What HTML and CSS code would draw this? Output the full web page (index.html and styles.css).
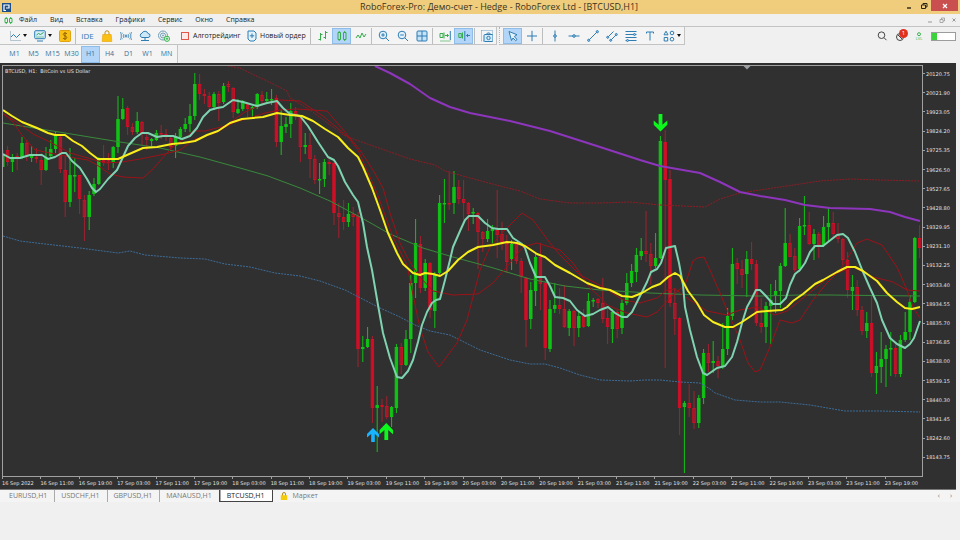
FILE: index.html
```html
<!DOCTYPE html>
<html lang="ru">
<head>
  <meta charset="utf-8">
  <title>RoboForex-Pro</title>
  <link rel="stylesheet" href="styles.css">
</head>
<body>
  <header class="titlebar">
    <svg class="app-logo" viewBox="0 0 9 9"><rect width="9" height="9" fill="#1c4f87"/><path d="M2 7.5V2h5v3H4M2 5v2.5h2" fill="none" stroke="#fff" stroke-width="1.2"/></svg>
    <h1>RoboForex-Pro: Демо-счет - Hedge - RoboForex Ltd - [BTCUSD,H1]</h1>
    <div class="window-buttons">
      <button aria-label="Свернуть"><svg viewBox="0 0 8 8"><path d="M2 6h4" stroke="#2b2413" stroke-width="1.4"/></svg></button>
      <button aria-label="Восстановить"><svg viewBox="0 0 8 8"><path d="M1.5 3h4v3.500h-4zM3 3V1.500h4V5H5.500" fill="none" stroke="#2b2413"/></svg></button>
      <button class="close" aria-label="Закрыть"><svg viewBox="0 0 8 8"><path d="M2 2l4 4M6 2L2 6" stroke="#fff" stroke-width="1.200"/></svg></button>
    </div>
  </header>

  <nav class="menu">
    <svg class="menu-logo" viewBox="0 0 9 9"><path d="M1 2.500h2.500v4H1zM5.500 2.500H8v4H5.500zM2.200 1v1.500M2.200 6.500V8M6.700 1v1.500M6.700 6.500V8" fill="none" stroke="#35b44a"/></svg>
    <a href="#">Файл</a>
    <a href="#">Вид</a>
    <a href="#">Вставка</a>
    <a href="#">Графики</a>
    <a href="#">Сервис</a>
    <a href="#">Окно</a>
    <a href="#">Справка</a>
    <div class="child-buttons">
      <button aria-label="Свернуть окно"><svg viewBox="0 0 8 8"><path d="M2 6h4" stroke="#999"/></svg></button>
      <button aria-label="Восстановить окно"><svg viewBox="0 0 8 8"><path d="M2 3.500h3v3H2zM3.500 3.500V2h3v3H5" fill="none" stroke="#999" stroke-width=".8"/></svg></button>
      <button aria-label="Закрыть окно"><svg viewBox="0 0 8 8"><path d="M2.500 2.500l3 3M5.500 2.500l-3 3" stroke="#999"/></svg></button>
    </div>
  </nav>

  <div class="toolbars">
    <div class="toolbar">
      <button class="tool drop" aria-label="Линия"><svg viewBox="0 0 12 12"><path d="M1.500 1v9.500H12" stroke="#9bb2c2" stroke-width=".7"/><path d="M2 7l2.500-2.500L7.500 7.500 11 4"/></svg><i class="caret"></i></button>
      <button class="tool drop" aria-label="Индикаторы"><svg viewBox="0 0 12 12"><rect x=".7" y=".7" width="10.600" height="8" rx="1" fill="#d5ecfa"/><path d="M2.500 5l2-1.500 2 1 3-2" stroke="#2ba84a"/><path d="M2.500 7h7" stroke="#2ba84a" stroke-dasharray="1 1"/><path d="M3 11h6"/></svg><i class="caret"></i></button>
      <button class="tool" aria-label="Депозит"><svg viewBox="0 0 12 12"><rect x=".500" y=".500" width="11" height="11" rx="1" fill="#fbc016" stroke="#e0a312"/><path d="M8 3.800C7 2.800 4.200 2.900 4.300 4.500 4.400 6 7.800 5.700 7.800 7.500 7.800 9.200 5 9.300 4 8.200M6 2v8" stroke="#8a5b00" stroke-width=".9"/></svg></button>
      <i class="sep"></i>
      <button class="tool ide">IDE</button>
      <button class="tool" aria-label="Маркет"><svg viewBox="0 0 12 12"><path d="M4 5V2.800a2 2 0 0 1 4 0V5" stroke="#c28c10"/><path d="M1.800 4.500h8.400l.6 7H1.200z" fill="#fbc016" stroke="#e8ab10" stroke-width=".7"/></svg></button>
      <button class="tool" aria-label="Сигналы"><svg viewBox="0 0 12 12"><circle cx="6" cy="6" r="1"/><path d="M4 4a3 3 0 0 0 0 4M8 4a3 3 0 0 1 0 4M2.500 2.800a4.500 4.500 0 0 0 0 6.400M9.500 2.800a4.500 4.500 0 0 1 0 6.400M1 2a6 6 0 0 0 0 8M11 2a6 6 0 0 1 0 8" stroke-width=".8"/></svg></button>
      <button class="tool" aria-label="Облако"><svg viewBox="0 0 12 12"><path d="M3 7.500a2.200 2.200 0 0 1 0-4.300 3.200 3.200 0 0 1 6 .3 2 2 0 0 1 0 4z" fill="#cfe8f8"/><path d="M6 7.500v3M2 10.500h8"/></svg></button>
      <button class="tool" aria-label="Тестер"><svg viewBox="0 0 12 12"><circle cx="5" cy="5.500" r="4.500" stroke="#6e9cb5"/><circle cx="5" cy="5.500" r="2.500" stroke="#6e9cb5"/><circle cx="5" cy="5.500" r=".6" stroke="#6e9cb5"/><circle cx="9" cy="8.800" r="2.600" fill="#fff" stroke="#35b44a"/><path d="M9 7.300v3M7.500 8.800h3" stroke="#35b44a"/></svg></button>
      <button class="tool-text"><svg viewBox="0 0 12 12"><rect x="2.500" y="2.500" width="7" height="7" fill="#fdeae8" stroke="#e2574c"/></svg>Алготрейдинг</button>
      <button class="tool-text"><svg viewBox="0 0 12 12"><path d="M2 1h6l2 2v6L8 11H4L2 9z" fill="#e4f2fc"/><path d="M6 3.500v4.500M3.800 5.800h4.400"/></svg>Новый ордер</button>
      <i class="sep"></i>
      <button class="tool" aria-label="Бары"><svg class="green" viewBox="0 0 12 12"><path d="M3.500 3v7.500M1.500 9.500h2M3.500 4.500h2M8.500 1v8M8.500 2.500h2M6.500 7.500h2"/></svg></button>
      <button class="tool active" aria-label="Свечи"><svg class="green" viewBox="0 0 12 12"><path d="M2 2.500h2.500v7H2zM7.500 2.500H10v7H7.500zM3.200 1v1.500M3.200 9.500V11M8.700 1v1.500M8.700 9.500V11"/></svg></button>
      <button class="tool" aria-label="Линия цены"><svg class="green" viewBox="0 0 12 12"><path d="M1 8l2-3 2 3 2-5 2 4 2-3"/></svg></button>
      <i class="sep"></i>
      <button class="tool" aria-label="Увеличить"><svg viewBox="0 0 12 12"><circle cx="5" cy="5" r="3.800" fill="#e4f2fc"/><path d="M7.800 7.800L11 11M3.200 5h3.600M5 3.200v3.600"/></svg></button>
      <button class="tool" aria-label="Уменьшить"><svg viewBox="0 0 12 12"><circle cx="5" cy="5" r="3.800" fill="#e4f2fc"/><path d="M7.800 7.800L11 11M3.200 5h3.600"/></svg></button>
      <button class="tool" aria-label="Плитка"><svg viewBox="0 0 12 12"><rect x="1" y="1" width="10" height="10" rx="1" fill="#c5e2f7"/><path d="M6 1v10M1 6h10"/></svg></button>
      <i class="sep"></i>
      <button class="tool" aria-label="Автопрокрутка"><svg class="green" viewBox="0 0 12 12"><path d="M1 3.500h3v4H1zM5 2.500v6M6 5.500h3.500M8 4l1.500 1.500L8 7"/><path d="M1 11h10.500" stroke-width=".6"/><path d="M11.300 1v9" stroke="#2f7db3"/></svg></button>
      <button class="tool active" aria-label="Сдвиг графика"><svg class="green" viewBox="0 0 12 12"><path d="M.8 3.500h2.500v4H.8zM4.500 2.500v6"/><path d="M6.800 1v10M12 5.500H8.500M10 4L8.500 5.500 10 7" stroke="#2f7db3"/></svg></button>
      <i class="sep"></i>
      <button class="tool" aria-label="Снимок"><svg viewBox="0 0 12 12"><rect x=".500" y=".500" width="11" height="10.500" stroke-dasharray="1 1" stroke-width=".7"/><rect x="3" y="4.500" width="9" height="7" rx="1" fill="#d5ecfa"/><path d="M5.500 4.300l1-1.300h2l1 1.300"/><circle cx="7.500" cy="8" r="1.700"/></svg></button>
    </div>
    <div class="toolbar drawing">
      <button class="tool active" aria-label="Курсор"><svg viewBox="0 0 12 12"><path d="M2 1.500l8 3.200-2.700 1.800L10 9.500 8.700 10.700 6 8l-1.500 2.500z" fill="#e4f2fc"/></svg></button>
      <button class="tool" aria-label="Перекрестие"><svg viewBox="0 0 12 12"><path d="M6 .8v10.400M1 6h10"/></svg></button>
      <i class="sep"></i>
      <button class="tool" aria-label="Вертикальная линия"><svg viewBox="0 0 12 12"><path d="M6 .5v11"/><circle cx="6" cy="6" r="1.300" fill="#9ccbed"/></svg></button>
      <button class="tool" aria-label="Горизонтальная линия"><svg viewBox="0 0 12 12"><path d="M.5 6h11"/><circle cx="6" cy="6" r="1.300" fill="#9ccbed"/></svg></button>
      <button class="tool" aria-label="Трендовая линия"><svg viewBox="0 0 12 12"><path d="M1.500 10.500l9-9"/><circle cx="1.700" cy="10.300" r="1.100" fill="#9ccbed"/><circle cx="10.300" cy="1.700" r="1.100" fill="#9ccbed"/></svg></button>
      <button class="tool" aria-label="Канал"><svg viewBox="0 0 12 12"><path d="M1.500 7.500l6-6M4.500 10.500l6-6"/><circle cx="1.700" cy="7.300" r="1" fill="#9ccbed"/><circle cx="4.700" cy="10.300" r="1" fill="#9ccbed"/><circle cx="10.300" cy="4.500" r="1" fill="#9ccbed"/></svg></button>
      <button class="tool" aria-label="Фибоначчи"><svg viewBox="0 0 12 12"><path d="M.5 1.500h11M.5 4.500h11M.5 7.500h11M.5 10.500h11"/><circle cx="9.500" cy="4.500" r="1" fill="#9ccbed"/><circle cx="2.500" cy="10.500" r="1" fill="#9ccbed"/></svg></button>
      <button class="tool" aria-label="Текст"><svg viewBox="0 0 12 12"><path d="M2.500 3.500V2h7v1.500M6 2v8.500"/></svg></button>
      <button class="tool drop" aria-label="Объекты"><svg viewBox="0 0 12 12"><path d="M3 1.200L5 4.800H1zM1.200 7.500h3.500V11H1.200z"/><circle cx="9" cy="3" r="1.800"/><circle cx="9" cy="9.200" r="1.800"/></svg><i class="caret"></i></button>
    </div>
    <div class="status">
      <button aria-label="Поиск"><svg viewBox="0 0 12 12"><circle cx="5.500" cy="5.200" r="3.300" fill="none" stroke="#444"/><path d="M8 7.700l2.500 2.500" stroke="#444"/></svg></button>
      <button class="bell" aria-label="Уведомления"><svg viewBox="0 0 12 12"><circle cx="5" cy="7" r="3.500" fill="none" stroke="#444"/><path d="M3 5l4 4" stroke="#444"/></svg><span class="badge">1</span></button>
      <div class="level"><svg viewBox="0 0 8 5"><circle cx="4" cy="2.200" r="1.500" fill="none" stroke="#35b44a"/></svg>LVL</div>
      <div class="battery"><i></i></div>
    </div>
  </div>

  <div class="timeframes">
    <button>M1</button>
    <button>M5</button>
    <button>M15</button>
    <button>M30</button>
    <button class="active">H1</button>
    <button>H4</button>
    <button>D1</button>
    <button>W1</button>
    <button>MN</button>
  </div>

  <main class="chart">
    <div class="plot">
      <svg id="plot" viewBox="3 66 919 410" preserveAspectRatio="none">
        <g id="candles"></g>
        <g id="lines"></g>
        <path d="M743.500 66h7l-3.500 3.500z" fill="#9aa0a6"/>
        <path d="M373 428l6 6v3.500l-4.200-3.500v8h-3.600v-8l-4.200 3.500V434z" fill="#19b4ff"/>
        <path d="M386.300 423l6.700 7v4.200l-4.800-4.200v10h-3.800v-10l-4.800 4.200V430z" fill="#0cf81c"/>
        <path d="M660.500 131.500l6.800-6.700v-4.300l-4.900 4.300V114h-3.800v10.800l-4.900-4.300v4.300z" fill="#0cf81c"/>
      </svg>
      <div class="plot-title">BTCUSD, H1:&nbsp; BitCoin vs US Dollar</div>
    </div>
    <ul class="prices" id="prices"></ul>
    <ul class="times" id="times"></ul>
  </main>

  <nav class="tabs">
    <a href="#">EURUSD,H1</a>
    <a href="#">USDCHF,H1</a>
    <a href="#">GBPUSD,H1</a>
    <a href="#">MANAUSD,H1</a>
    <a href="#" class="current">BTCUSD,H1</a>
    <a href="#" class="market"><svg viewBox="0 0 8 8"><path d="M2.500 4V2a1.500 1.500 0 0 1 3 0v2" fill="none" stroke="#b78a1a"/><path d="M.8 3.200h6.400V8H.8z" fill="#f5cb0c"/></svg>Маркет</a>
    <span class="scroll"><button aria-label="Влево">‹</button><button aria-label="Вправо">›</button></span>
  </nav>

  <script src="chart.js"></script>
</body>
</html>
```
FILE: styles.css
```css
* {
  box-sizing: border-box;
}

body {
  margin: 0;
  min-height: 100vh;
  background-color: #f0f0f0;
  font-family: "Open Sans", "Noto Sans", sans-serif;
  font-size: 7px;
  line-height: 10px;
  color: #222;
}

button {
  margin: 0;
  padding: 0;
  border: 0;
  background: none;
  font: inherit;
  color: inherit;
  display: flex;
  align-items: center;
  justify-content: center;
}

a {
  color: inherit;
  text-decoration: none;
}

ul {
  margin: 0;
  padding: 0;
  list-style: none;
}

/* title bar */
.titlebar {
  display: flex;
  align-items: center;
  height: 14px;
  padding: 0 2px;
  background-color: #f0cd7d;
}

.app-logo {
  width: 9px;
  height: 9px;
}

.titlebar h1 {
  flex: 1;
  margin: 0;
  padding-left: 86px;
  font-size: 9px;
  font-weight: normal;
  line-height: 14px;
  text-align: center;
  color: #3d331c;
}

.window-buttons {
  display: flex;
  align-self: flex-start;
}

.window-buttons button {
  width: 15px;
  height: 11px;
}

.window-buttons svg {
  width: 8px;
  height: 8px;
}

.window-buttons .close {
  width: 27px;
  background-color: #c9504e;
}

/* menu */
.menu {
  display: flex;
  align-items: center;
  gap: 13px;
  height: 12px;
  padding-left: 4px;
}

.menu-logo {
  width: 9px;
  height: 9px;
  margin-right: -7px;
}

.child-buttons {
  display: flex;
  gap: 4px;
  margin-left: auto;
  padding-right: 2px;
}

.child-buttons svg {
  display: block;
  width: 8px;
  height: 8px;
}

/* toolbars */
.toolbars {
  display: flex;
  height: 19px;
  border-top: 1px solid #c3c3c3;
}

.toolbar {
  display: flex;
  align-items: center;
  padding-left: 5px;
  border-right: 1px solid #c3c3c3;
  border-bottom: 1px solid #c3c3c3;
  background-color: #f4f4f4;
}

.drawing {
  margin-left: 2px;
  padding-left: 3px;
  border-left: 1px dotted #b5b5b5;
}

.tool {
  width: 19px;
  height: 16px;
  color: #2f7db3;
}

.tool svg,
.tool-text svg {
  width: 12px;
  height: 12px;
  fill: none;
  stroke: #2f7db3;
}

.tool svg.green {
  stroke: #35ad4a;
}

.tool.active,
.timeframes .active {
  border: 1px solid #8fbdea;
  background-color: #b3d5f7;
}

.drop {
  width: 25px;
  gap: 2px;
}

.caret {
  border: 2px solid transparent;
  border-top: 3px solid #111;
  border-bottom: 0;
}

.sep {
  width: 1px;
  height: 16px;
  margin: 0 2px 0 1px;
  background-color: #bdbdbd;
}

.ide {
  font-size: 8px;
}

.tool-text {
  justify-content: flex-start;
  gap: 2px;
  min-width: 67px;
  height: 16px;
  padding-left: 4px;
  white-space: nowrap;
}

.tool + .tool-text {
  margin-left: 2px;
}

.status {
  display: flex;
  align-items: center;
  gap: 7px;
  margin-left: auto;
  padding-right: 4px;
}

.status button svg {
  display: block;
  width: 12px;
  height: 12px;
}

.bell {
  position: relative;
}

.badge {
  position: absolute;
  top: -1px;
  right: -1px;
  width: 9px;
  height: 9px;
  border-radius: 50%;
  background-color: #e0301e;
  font-size: 6px;
  line-height: 9px;
  color: #fff;
}

.level {
  width: 10px;
  font-size: 4px;
  line-height: 4px;
  text-align: center;
  color: #35b44a;
}

.level svg {
  display: block;
  width: 8px;
  height: 5px;
  margin: 0 auto;
}

.battery {
  width: 25px;
  height: 9px;
  border: 1px solid #9c9c9c;
  background-color: #fff;
}

.battery i {
  display: block;
  width: 5px;
  height: 7px;
  background-color: #3bd23d;
}

.timeframes {
  display: flex;
  align-items: center;
  width: 178px;
  height: 18px;
  padding-left: 5px;
  border-right: 1px solid #c3c3c3;
  background-color: #f4f4f4;
  color: #33719a;
}

.timeframes button {
  width: 19px;
  height: 17px;
}

/* chart */
.chart {
  display: grid;
  grid-template-columns: 1fr 33px;
  grid-template-rows: auto 12px;
  margin-right: 4px;
  padding: 2px 0 0 2px;
  border-bottom: 1px solid #777;
  background-color: #303030;
  font-family: "DejaVu Sans", sans-serif;
  font-size: 5px;
  line-height: 8px;
  color: #e2e2e2;
}

.plot {
  position: relative;
  border: 1px solid #a0a0a0;
}

.plot svg {
  display: block;
  width: 100%;
  height: 410px;
}

.plot-title {
  position: absolute;
  top: 1px;
  left: 2px;
}

.prices {
  display: flex;
  flex-direction: column;
  height: 403px;
  margin-top: -1px;
}

.prices li {
  flex: 1;
  display: flex;
  align-items: center;
}

.prices li::before {
  content: "";
  width: 2px;
  height: 1px;
  margin-right: 1px;
  background-color: #a0a0a0;
}

.times {
  display: grid;
  grid-template-columns: repeat(24, 1fr);
}

.times li {
  white-space: nowrap;
}

.times li::before {
  content: "";
  display: block;
  width: 1px;
  height: 2px;
  background-color: #a0a0a0;
}

.candle-up {
  fill: #10c414;
  stroke: #10c414;
}

.candle-down {
  fill: #d00f27;
  stroke: #d00f27;
}

.candle-down.wick {
  stroke: #a3202f;
}

.line {
  fill: none;
  stroke-linejoin: round;
}

.fast {
  stroke: #7fd3b1;
  stroke-width: 2;
}

.slow {
  stroke: #f8ee1c;
  stroke-width: 2;
}

.trend {
  stroke: #388a3b;
}

.long {
  stroke: #8e35bd;
  stroke-width: 2;
}

.cycle {
  stroke: #9c1218;
}

.upper {
  stroke: #8e1c24;
  stroke-dasharray: 2 1;
}

.lower {
  stroke: #3d6c97;
  stroke-dasharray: 2 1;
}

/* bottom tabs */
.tabs {
  display: flex;
  height: 12px;
  padding-left: 2px;
  background-color: #f4f4f4;
  line-height: 12px;
  color: #777;
}

.tabs a {
  padding: 0 7px;
}

.tabs a + a {
  box-shadow: -1px 0 0 -0px #f4f4f4, inset 1px 0 0 #aaa;
}

.tabs .current {
  border: 1px solid #444;
  border-top: 0;
  background-color: #fff;
  line-height: 11px;
  color: #222;
}

.tabs .market {
  display: flex;
  align-items: center;
  gap: 5px;
  box-shadow: none;
}

.tabs .market svg {
  width: 8px;
  height: 8px;
}

.scroll {
  display: flex;
  gap: 10px;
  margin-left: auto;
  padding-right: 8px;
}
```
FILE: chart.js
```js
// one row per hour: direction, high, body top, body bottom, low
var candles = [
  ['g',150,154,167,167],['r',146,150,162,166],['g',154,157,162,172],['r',153,156,158,170],['g',137,143,157,159],['r',140,143,156,161],
  ['g',146,156,158,162],['r',148,157,159,163],['r',153,160,170,185],['g',147,157,170,171],['g',140,149,156,159],['g',132,136,149,153],
  ['r',135,137,169,173],['r',155,170,202,217],['g',148,175,202,207],['g',158,175,176,192],['r',175,175,199,214],['r',195,200,217,241],
  ['g',191,195,217,230],['g',178,184,194,196],['g',157,159,184,185],['r',145,158,163,166],['r',153,160,163,170],['g',146,147,162,168],
  ['g',96,119,147,153],['g',98,109,119,120],['r',106,108,127,135],['r',123,127,132,135],['g',112,121,132,134],['r',121,122,134,145],
  ['r',133,137,140,150],['g',138,139,141,148],['g',130,133,140,141],['r',125,133,134,139],['r',129,134,135,141],['r',136,138,147,149],
  ['g',133,137,146,158],['g',127,129,137,140],['g',118,124,129,132],['g',104,116,124,132],['g',73,84,116,120],['r',74,84,94,100],
  ['r',89,94,96,104],['r',92,96,107,109],['g',92,94,107,110],['r',91,94,103,121],['g',83,86,102,104],['r',81,84,87,92],
  ['r',87,88,112,118],['g',99,109,113,114],['g',100,101,109,111],['r',102,103,109,117],['g',106,107,109,118],['g',93,94,107,109],
  ['r',91,95,101,104],['g',92,99,101,103],['g',89,99,100,105],['r',95,98,142,147],['g',110,126,142,155],['g',117,124,127,133],
  ['g',103,111,124,138],['r',107,111,115,120],['r',115,116,147,162],['g',133,145,147,154],['r',133,145,159,178],['r',155,159,180,184],
  ['g',163,179,180,194],['g',159,162,179,187],['r',158,162,164,175],['r',160,163,213,225],['r',203,213,217,238],['r',200,217,222,230],
  ['g',203,214,222,227],['r',207,214,217,226],['r',212,216,349,367],['g',336,347,349,362],['g',327,339,347,348],['r',336,339,408,423],
  ['g',386,405,408,452],['r',399,405,407,422],['r',396,406,417,419],['g',406,407,417,427],['g',344,347,408,413],['r',343,347,365,374],
  ['g',330,339,365,366],['g',275,283,339,353],['g',219,243,283,298],['r',236,244,288,293],['g',259,263,288,291],['r',262,263,310,318],
  ['g',272,275,311,328],['g',195,203,273,275],['g',179,203,204,223],['r',171,203,204,210],['g',171,187,203,214],['r',180,187,199,204],
  ['r',180,199,203,220],['r',202,203,214,231],['g',208,212,213,224],['r',212,213,232,269],['r',231,232,239,252],['g',219,231,239,242],
  ['g',225,229,231,244],['r',190,230,235,258],['r',222,234,242,250],['r',235,243,262,273],['g',240,244,259,270],['r',243,244,261,264],
  ['r',258,261,277,293],['r',277,278,320,347],['g',282,290,319,329],['g',254,257,291,306],['r',243,257,284,310],['r',281,283,348,360],
  ['g',300,309,349,352],['g',283,305,309,313],['r',288,305,309,314],['r',285,309,327,328],['g',309,311,328,336],['r',310,311,328,346],
  ['g',312,316,328,337],['r',309,316,327,328],['g',293,301,326,327],['g',298,300,301,307],['r',298,299,303,308],['r',278,303,319,323],
  ['r',308,318,327,344],['g',309,312,329,343],['r',310,312,329,338],['g',299,303,328,334],['g',273,283,303,305],['g',264,271,283,287],
  ['g',248,255,272,282],['g',238,251,256,260],['r',211,251,254,262],['r',243,254,266,285],['g',233,258,266,268],['g',136,141,258,259],
  ['r',130,142,180,368],['r',170,179,303,307],['r',288,303,319,335],['r',317,318,408,435],['g',401,403,407,473],['r',384,403,408,417],
  ['r',391,408,423,429],['g',395,398,423,428],['g',349,353,398,404],['r',344,353,363,372],['g',341,361,363,373],['r',356,361,366,378],
  ['g',323,349,366,369],['g',308,316,349,355],['g',248,264,316,320],['r',258,263,269,284],['r',260,269,275,288],['g',251,259,274,297],
  ['r',242,259,264,270],['r',260,264,323,326],['r',298,323,327,333],['g',302,306,327,343],['g',284,300,306,344],['g',280,291,296,313],
  ['g',263,266,291,308],['g',208,243,266,267],['r',234,243,257,257],['r',248,256,270,272],['g',218,226,269,272],['g',196,225,226,235],
  ['r',212,225,244,245],['g',229,234,244,260],['r',232,234,245,258],['g',216,227,245,247],['g',207,223,227,241],['r',212,223,234,237],
  ['r',223,235,239,243],['r',238,239,260,265],['r',252,260,290,298],['g',275,287,291,310],['r',280,287,310,316],['r',306,310,331,335],
  ['g',312,323,331,338],['r',296,323,373,377],['g',352,366,373,394],['g',332,359,367,383],['g',345,349,359,387],['g',332,348,349,376],
  ['r',343,348,374,377],['g',335,340,374,377],['g',312,332,340,342],['g',295,302,332,340],['g',237,238,302,303],['r',225,238,248,258]
];

var lines = [
  ['upper', '228,66 240,68 250,73 267,81 287,91 290,98 310,110 345,136 390,152 410,159 435,165 445,171 470,178 500,186 520,191 540,199 570,203 600,203 630,202 660,205 705,207 720,199 740,193 780,187 820,181 850,179 880,180 920,181'],
  ['lower', '3,236 20,241 45,244 80,248 118,253 130,251 145,255 180,258 205,259 225,264 250,267 275,273 300,276 320,281 345,290 380,308 400,317 415,325 430,331 450,335 480,350 510,360 530,364 545,364 560,368 580,375 600,380 630,381 645,380 660,380 680,382 700,383 710,389 715,393 735,400 760,402 780,402 810,405 845,411 880,411 920,412'],
  ['trend', '3,123 65,133 120,142 160,148 200,157 240,168 268,176 300,188 330,201 360,217 390,234 423,248 453,257 490,267 530,279 565,286 600,290 650,293 700,295 760,296 800,295 830,295 920,296'],
  ['cycle', '3,114 15,121 33,134 50,142 70,153 88,158 105,163 122,162 140,159 165,154 180,150 195,139 215,133 233,123 265,113 280,110 297,109 327,111 345,132 360,150 373,170 383,188 390,213 400,243 407,257 418,275 433,291 453,295 478,294 493,283 510,263 523,247 537,243 550,247 560,250 573,263 590,288 600,297 607,305 627,313 647,317 657,312 673,295 685,285 693,261 697,258 704,257 710,270 720,293 730,317 740,340 748,363 755,372 760,370 770,347 780,320 792,323 800,320 813,300 827,283 840,270 857,243 867,239 882,245 897,267 907,290 913,307 920,318'],
  ['cycle', '3,113 13,122 21,134 35,150 50,153 75,158 88,160 97,165 110,174 123,177 143,178 153,169 166,154 175,145 183,140 193,131 205,131 225,126 245,112 265,103 280,100 300,101 323,116 348,137 358,150 377,193 393,237 407,265 413,295 420,328 428,352 439,367 457,343 467,320 480,270 490,247 503,232 522,213 533,220 550,243 560,255 580,275 603,287 623,300 640,303 657,298 667,290 675,289 690,300 707,311 727,315 740,310 757,307 775,315 787,311 807,295 830,276 853,267 873,277 893,282 907,290 920,291'],
  ['long', '375,66 390,73 410,84 430,98 450,107 470,113 510,121 550,131 600,147 640,160 660,166 700,173 720,182 740,192 760,196 785,200 805,205 830,208 870,209 890,212 905,217 920,221'],
  ['fast', '3,154 10,158 20,158 30,155 42,155 48,159 55,157 62,153 66,153 72,161 80,168 87,179 92,188 96,192 100,189 108,179 117,170 123,157 128,146 135,138 142,133 148,133 157,137 163,136 173,136 182,139 190,136 197,128 203,117 210,110 217,108 223,107 233,100 243,102 257,106 267,103 277,101 283,108 290,114 300,116 308,126 318,142 328,157 334,160 338,166 345,182 353,195 358,202 363,223 367,247 372,270 378,305 383,333 390,358 397,377 402,378 408,371 413,360 418,342 422,325 427,312 432,303 436,300 440,299 445,280 450,260 453,247 460,231 465,220 469,216 478,216 485,223 492,228 498,229 507,229 513,238 522,244 525,248 530,263 536,277 545,277 550,286 555,297 563,298 570,301 577,310 585,316 593,314 600,310 608,307 615,313 622,317 627,317 632,312 640,296 647,282 651,272 657,269 661,263 666,248 675,246 679,263 683,285 685,307 690,330 697,357 703,373 707,375 717,368 725,366 732,357 737,342 742,323 747,307 752,298 756,290 760,290 765,295 773,304 780,304 786,298 790,285 795,274 800,270 805,263 810,252 815,246 823,246 828,242 837,235 843,234 848,238 855,252 863,272 870,288 877,303 882,320 890,338 897,344 905,348 910,344 914,338 920,321'],
  ['slow', '3,110 12,116 22,122 37,128 48,133 55,135 65,135 73,141 82,146 90,153 98,159 107,159 118,159 127,155 143,148 157,147 172,144 183,143 195,141 207,135 218,131 230,123 242,119 263,117 277,113 290,115 302,116 313,121 325,129 338,137 348,148 358,157 363,167 372,188 380,210 388,233 397,253 403,264 413,273 420,275 425,273 433,274 440,276 448,271 458,260 468,252 478,247 493,245 507,242 517,243 525,246 537,254 545,257 555,265 570,273 587,283 600,288 610,290 622,296 632,297 642,293 652,287 660,284 668,277 675,273 680,276 688,291 697,303 704,315 713,322 725,327 733,327 742,322 757,312 767,311 782,310 787,307 793,301 803,294 815,284 823,280 837,272 847,267 855,267 863,271 877,281 887,293 897,302 905,308 912,309 920,307']
];

var svgNs = 'http://www.w3.org/2000/svg';

function draw(parent, tag, className, attrs) {
  var el = document.createElementNS(svgNs, tag);
  el.setAttribute('class', className);
  for (var name in attrs) {
    el.setAttribute(name, attrs[name]);
  }
  parent.appendChild(el);
}

var candleGroup = document.getElementById('candles');
candles.forEach(function(c, i) {
  var x = 2.8 + i * 4.8;
  var side = c[0] === 'g' ? 'candle-up' : 'candle-down';
  draw(candleGroup, 'line', side + ' wick', { x1: x, x2: x, y1: c[1], y2: c[4] });
  var body = { x: x - 1.2, y: c[2] + 0.5, width: 2.4, height: Math.max(c[3] - c[2] - 1, 0.5) };
  // short falling candles are hollow
  if (c[0] === 'r' && c[3] - c[2] < 36) body['fill-opacity'] = 0.35;
  draw(candleGroup, 'rect', side, body);
});

var lineGroup = document.getElementById('lines');
lines.forEach(function(l) {
  draw(lineGroup, 'polyline', 'line ' + l[0], { points: l[1] });
});

function addItem(list, text) {
  var li = document.createElement('li');
  li.textContent = text;
  list.appendChild(li);
}

var prices = document.getElementById('prices');
for (var i = 0; i < 21; i++) {
  addItem(prices, (20120.75 - i * 98.85).toFixed(2));
}

var times = document.getElementById('times');
addItem(times, '16 Sep 2022');
var hours = ['03:00', '11:00', '19:00'];
for (var n = 1; n < 24; n++) {
  addItem(times, (16 + Math.floor(n / 3)) + ' Sep ' + hours[n % 3]);
}
```
